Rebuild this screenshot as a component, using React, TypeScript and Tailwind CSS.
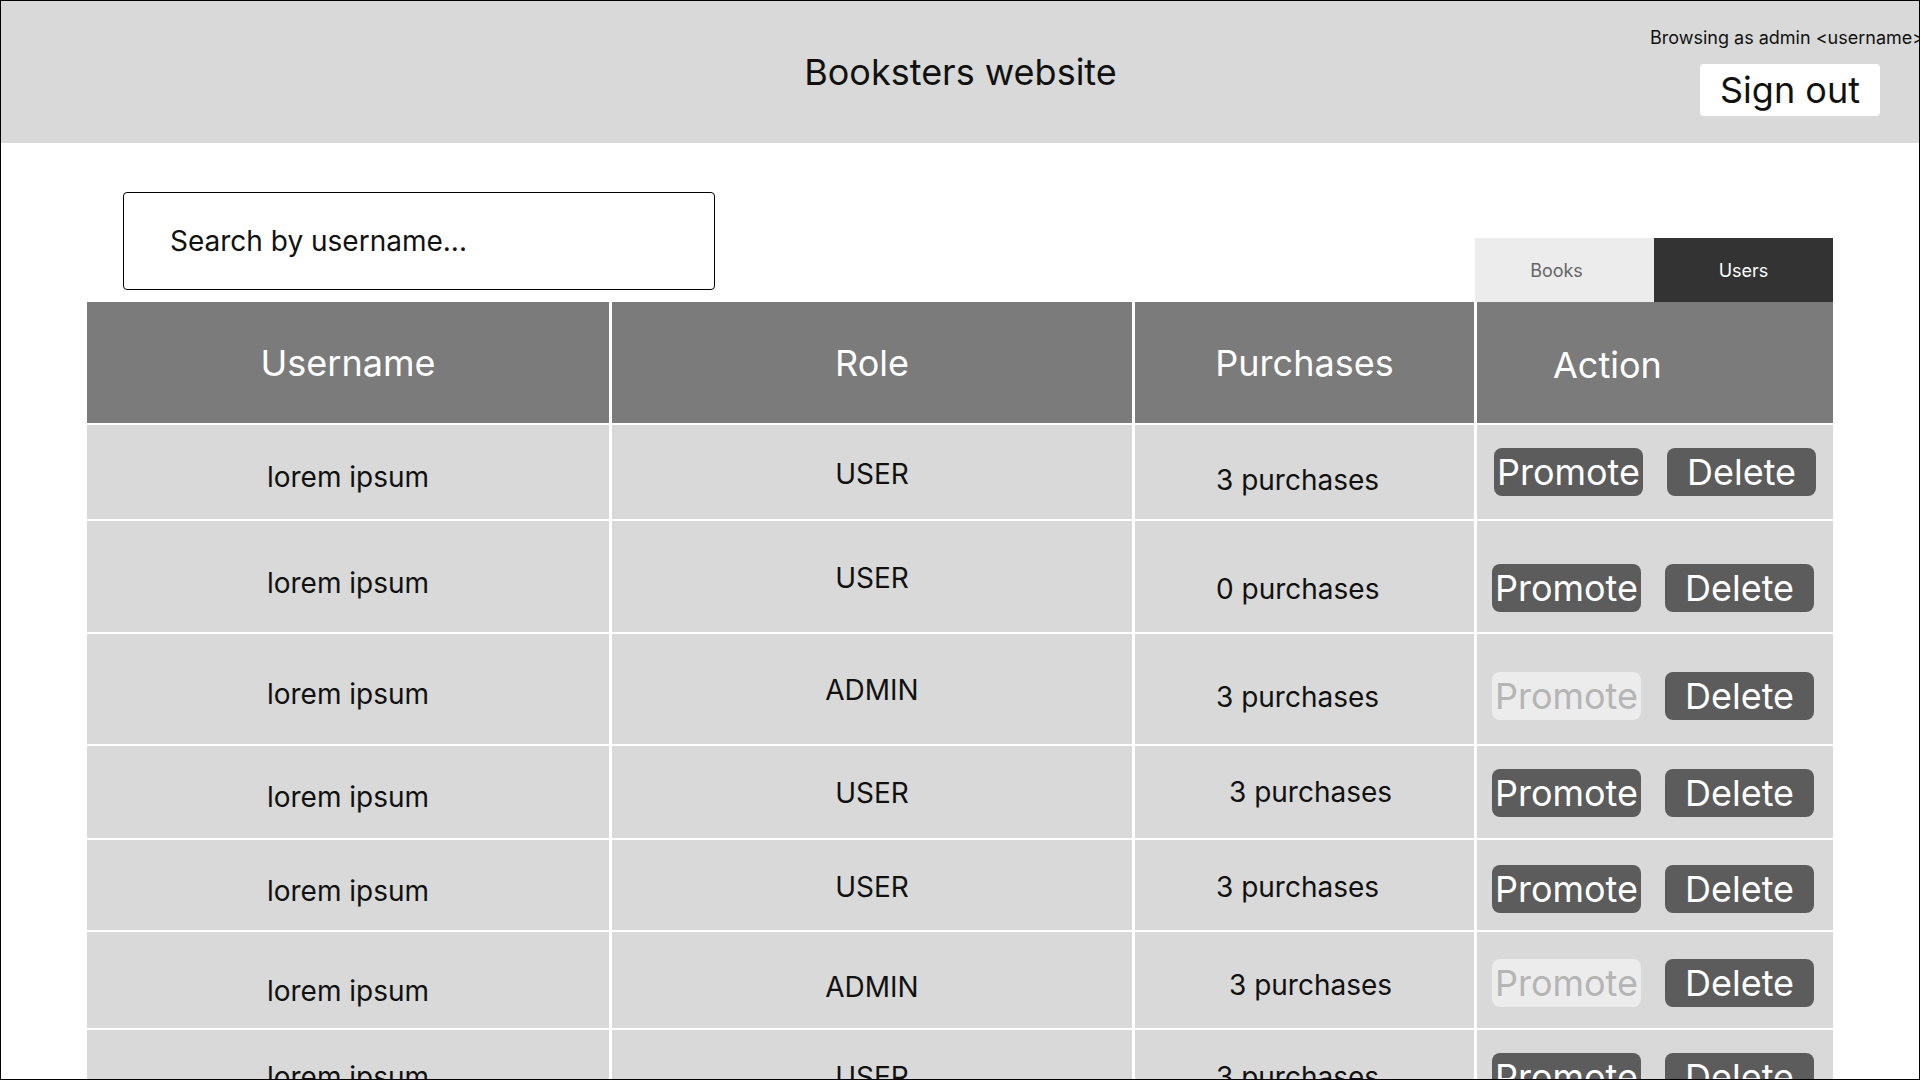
import React from "react";

type Row = {
  name: string;
  role: string;
  purchases: string;
  canPromote: boolean;
  height: string;
  namePad: string;
  rolePad: string;
  purchasePad: string;
  actionPad: string;
};

const ROWS: Row[] = [
  { name: "lorem ipsum", role: "USER", purchases: "3 purchases", canPromote: true, height: "h-[94px]", namePad: "pt-[10px]", rolePad: "pt-[4px]", purchasePad: "pt-[16px] pl-[81px]", actionPad: "pt-0 pl-[17px]" },
  { name: "lorem ipsum", role: "USER", purchases: "0 purchases", canPromote: true, height: "h-[111px]", namePad: "pt-[12px]", rolePad: "pt-[2px]", purchasePad: "pt-[24px] pl-[81px]", actionPad: "pt-[22px] pl-[15px]" },
  { name: "lorem ipsum", role: "ADMIN", purchases: "3 purchases", canPromote: false, height: "h-[110px]", namePad: "pt-[10px]", rolePad: "pt-[2px]", purchasePad: "pt-[16px] pl-[81px]", actionPad: "pt-[14px] pl-[15px]" },
  { name: "lorem ipsum", role: "USER", purchases: "3 purchases", canPromote: true, height: "h-[92px]", namePad: "pt-[10px]", rolePad: "pt-[2px]", purchasePad: "pt-0 pl-[94px]", actionPad: "pt-[2px] pl-[15px]" },
  { name: "lorem ipsum", role: "USER", purchases: "3 purchases", canPromote: true, height: "h-[90px]", namePad: "pt-[12px]", rolePad: "pt-[4px]", purchasePad: "pt-[3px] pl-[81px]", actionPad: "pt-[7px] pl-[15px]" },
  { name: "lorem ipsum", role: "ADMIN", purchases: "3 purchases", canPromote: false, height: "h-[96px]", namePad: "pt-[22px]", rolePad: "pt-[14px]", purchasePad: "pt-[10px] pl-[94px]", actionPad: "pt-[6px] pl-[15px]" },
  { name: "lorem ipsum", role: "USER", purchases: "3 purchases", canPromote: true, height: "h-[94px]", namePad: "pt-0", rolePad: "pt-0", purchasePad: "pt-0 pl-[81px]", actionPad: "pt-0 pl-[15px]" },
];

const COLS = "grid grid-cols-[522px_520px_339px_356px] gap-x-[3px]";

function ActionButton({ label, disabled }: { label: string; disabled?: boolean }) {
  return (
    <button
      disabled={disabled}
      className={`flex h-[48px] w-[149px] items-center justify-center rounded-[8px] text-[36px] leading-none ${
        disabled ? "bg-[#ececec] text-[#b5b5b5]" : "bg-[#5c5c5c] text-white"
      }`}
    >
      {label}
    </button>
  );
}

export default function App() {
  return (
    <div className="h-[1080px] w-[1920px] overflow-hidden border border-black bg-white font-['Inter',sans-serif] text-[#111]">
      <header className="flex h-[142px] bg-[#d9d9d9]">
        <div className="flex flex-1 items-center justify-center pl-[270px]">
          <h1 className="text-[36px] leading-none text-[#111]">Booksters website</h1>
        </div>
        <div className="w-[269px] pt-[26px]">
          <p className="whitespace-nowrap text-[18px] leading-[22px]">Browsing as admin &lt;username&gt;</p>
          <button className="ml-[50px] mt-[15px] flex h-[52px] w-[180px] items-center justify-center rounded-[4px] bg-white text-[36px] leading-none">
            Sign out
          </button>
        </div>
      </header>

      <main className="px-[86px] pt-[49px]">
        <div className="flex h-[110px] justify-between">
          <input
            className="ml-[36px] h-[98px] w-[592px] rounded-[4px] border border-black pl-[46px] text-[28px] outline-none placeholder:text-[#111]"
            placeholder="Search by username..."
          />
          <div className="flex self-end">
            <button className="flex h-[64px] w-[179px] items-center justify-center bg-[#ececec] pr-[16px] text-[18px] text-[#666]">
              Books
            </button>
            <button className="flex h-[64px] w-[179px] items-center justify-center bg-[#333333] text-[18px] text-white">
              Users
            </button>
          </div>
        </div>

        <div className="flex flex-col gap-y-[2px]">
          <div className={`${COLS} h-[121px] text-[36px] text-white`}>
            <div className="flex items-center justify-center bg-[#7b7b7b]">Username</div>
            <div className="flex items-center justify-center bg-[#7b7b7b]">Role</div>
            <div className="flex items-center justify-center bg-[#7b7b7b]">Purchases</div>
            <div className="flex items-center bg-[#7b7b7b] pl-[76px] pt-[4px]">Action</div>
          </div>

          {ROWS.map((row, i) => (
            <div key={i} className={`${COLS} ${row.height} text-[28px]`}>
              <div className={`flex items-center justify-center bg-[#d9d9d9] ${row.namePad}`}>{row.name}</div>
              <div className={`flex items-center justify-center bg-[#d9d9d9] ${row.rolePad}`}>{row.role}</div>
              <div className={`flex items-center bg-[#d9d9d9] ${row.purchasePad}`}>{row.purchases}</div>
              <div className={`flex items-center gap-[24px] bg-[#d9d9d9] ${row.actionPad}`}>
                <ActionButton label="Promote" disabled={!row.canPromote} />
                <ActionButton label="Delete" />
              </div>
            </div>
          ))}
        </div>
      </main>
    </div>
  );
}
